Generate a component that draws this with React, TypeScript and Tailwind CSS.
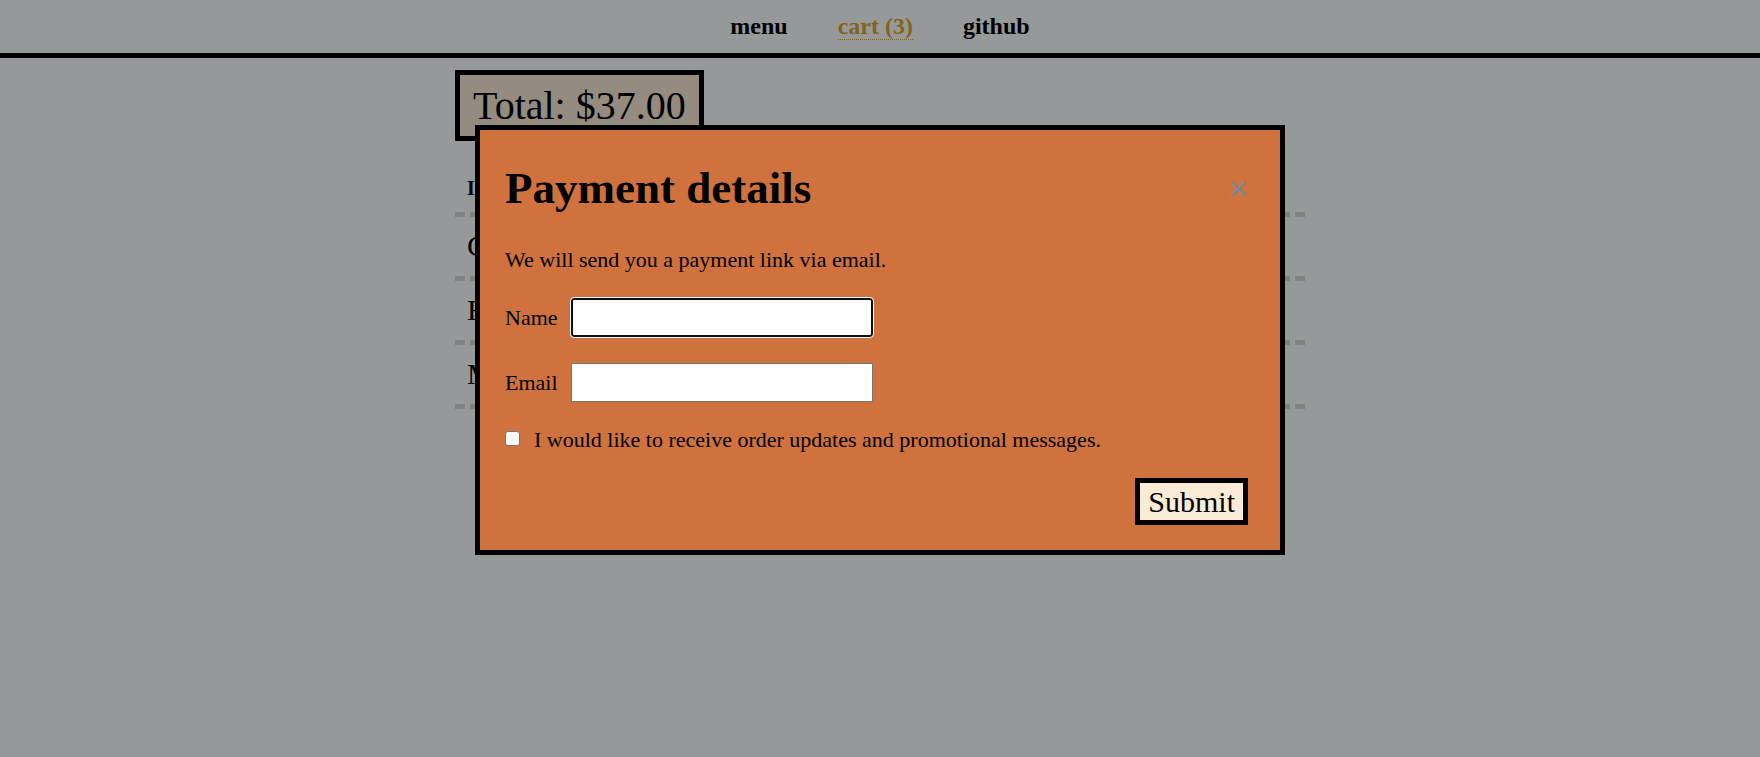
import { useState } from "react";

const items = ["Cappuccino", "Espresso", "Mocha"];

function Nav() {
  return (
    <nav className="border-b-[5px] border-black">
      <ul className="flex h-[53px] items-center justify-center gap-[50px] pb-0.5 text-2xl font-bold leading-6">
        <li>
          <a href="#menu">menu</a>
        </li>
        <li>
          <a href="#cart" className="border-b border-dotted border-[#85631a] text-[#85631a]">
            cart (3)
          </a>
        </li>
        <li>
          <a href="#github">github</a>
        </li>
      </ul>
    </nav>
  );
}

function Cart() {
  return (
    <main className="mx-auto flex w-full max-w-[850px] flex-col items-start pt-3">
      <button
        type="button"
        className="border-[5px] border-black bg-[#948c7e] px-[13px] py-2 text-[40px] leading-[45px]"
      >
        Total: $37.00
      </button>
      <ul className="mt-8 w-full">
        <li className="border-b-[5px] border-dashed border-[#808080] px-3 pb-[9px] text-xl font-bold leading-[30px]">
          Item
        </li>
        {items.map((name) => (
          <li
            key={name}
            className="border-b-[5px] border-dashed border-[#808080] px-3 pb-3 pt-[11px] text-[30px] leading-9"
          >
            {name}
          </li>
        ))}
      </ul>
    </main>
  );
}

function PaymentDialog() {
  const [name, setName] = useState("");
  const [email, setEmail] = useState("");
  const [promo, setPromo] = useState(false);

  return (
    <section
      role="dialog"
      aria-labelledby="payment-title"
      className="w-full max-w-[810px] border-[5px] border-black bg-[#cf723d] p-[25px] text-[22px] leading-6"
    >
      <div className="flex items-center justify-between pr-[7px]">
        <h1 id="payment-title" className="text-[45px] font-bold leading-[66px]">
          Payment details
        </h1>
        <button
          type="button"
          aria-label="Close"
          className="font-['Liberation_Sans',sans-serif] text-[34px] leading-9 text-[#778899]"
        >
          ×
        </button>
      </div>
      <form className="mt-[27px] flex flex-col" onSubmit={(e) => e.preventDefault()}>
        <p>We will send you a payment link via email.</p>
        <div className="mt-[26px] flex items-center">
          <label htmlFor="name" className="w-[66px]">
            Name
          </label>
          <input
            id="name"
            type="text"
            value={name}
            onChange={(e) => setName(e.target.value)}
            className="h-[39px] w-[302px] rounded-[3px] border-2 border-[#101010] bg-white px-1 outline outline-white"
          />
        </div>
        <div className="mt-[26px] flex items-center">
          <label htmlFor="email" className="w-[66px]">
            Email
          </label>
          <input
            id="email"
            type="email"
            value={email}
            onChange={(e) => setEmail(e.target.value)}
            className="h-[39px] w-[302px] border border-[#767676] bg-white px-1 outline-none"
          />
        </div>
        <div className="mt-[26px] flex items-start">
          <input
            id="promotion"
            type="checkbox"
            checked={promo}
            onChange={(e) => setPromo(e.target.checked)}
            className="mt-[3px] size-[15px] appearance-none rounded-[3px] border border-[#767676] bg-white checked:bg-[#0075ff]"
          />
          <label htmlFor="promotion" className="ml-[14px]">
            I would like to receive order updates and promotional messages.
          </label>
        </div>
        <button
          type="submit"
          className="mr-[7px] mt-[26px] self-end border-[5px] border-black bg-[#faebd7] px-2 text-[30px] leading-[37px]"
        >
          Submit
        </button>
      </form>
    </section>
  );
}

export default function App() {
  return (
    <div className="min-h-screen bg-[#959999] font-['Liberation_Serif',serif] text-black">
      <Nav />
      <Cart />
      <div className="fixed inset-0 flex items-start justify-center pt-[125px]">
        <PaymentDialog />
      </div>
    </div>
  );
}
